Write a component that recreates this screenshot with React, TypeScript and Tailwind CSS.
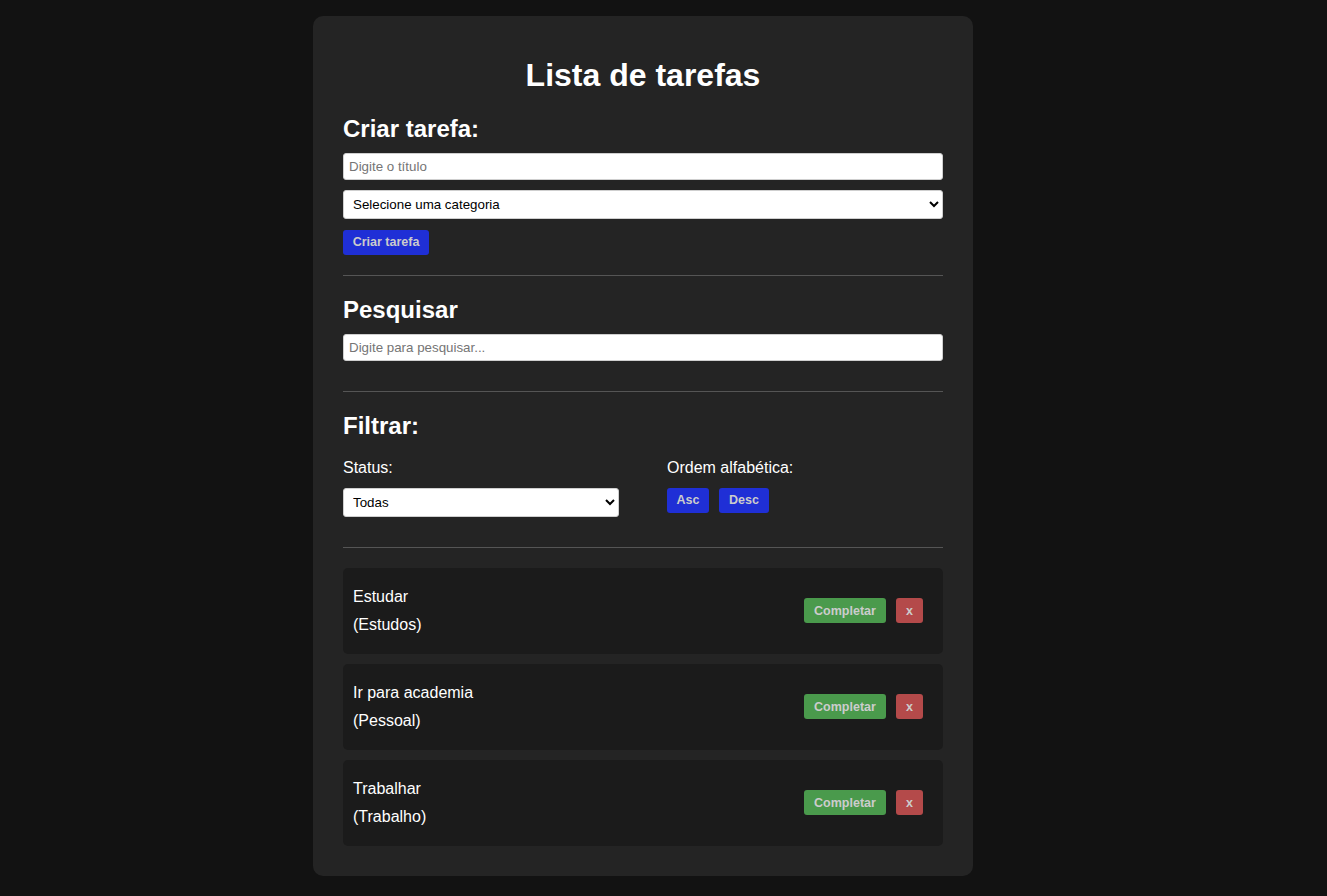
import { useState } from 'react'

type Task = { id: number; title: string; category: string }

const initialTasks: Task[] = [
  { id: 1, title: 'Estudar', category: 'Estudos' },
  { id: 2, title: 'Ir para academia', category: 'Pessoal' },
  { id: 3, title: 'Trabalhar', category: 'Trabalho' },
]

const btn = 'h-[25px] rounded-[3px] text-[12.5px] font-bold text-[#cccccc] text-center'
const field = 'w-full bg-white rounded-[3px] border border-[#cfcfcf] text-[13.33px] text-black outline-none'

const App: React.FC = () => {
  const [tasks, setTasks] = useState<Task[]>(initialTasks)

  return (
    <div className="min-h-screen bg-[#121212] flex justify-center pt-4 pb-5 pr-[41px] font-['Liberation_Sans',Arial,sans-serif]">
      <div className="w-[660px] bg-[#242424] rounded-[10px] px-[30px] pt-5 pb-[30px] text-white">
        <h1 className="mt-[21px] text-[32px] leading-[37px] font-bold text-center">Lista de tarefas</h1>

        <h2 className="mt-[21px] text-2xl leading-[28px] font-bold">Criar tarefa:</h2>
        <div className="mt-[10px] flex flex-col gap-[10px]">
          <input
            type="text"
            placeholder="Digite o título"
            className={`${field} h-[27px] px-[5px] placeholder-[#757575]`}
          />
          <select className={`${field} h-[29px] px-[5px]`}>
            <option>Selecione uma categoria</option>
            <option>Trabalho</option>
            <option>Pessoal</option>
            <option>Estudos</option>
          </select>
          <div>
            <button className={`${btn} w-[86px] bg-[#1f2fd6]`}>Criar tarefa</button>
          </div>
        </div>

        <hr className="mt-5 border-0 border-t border-[#555555]" />

        <h2 className="mt-5 text-2xl leading-[28px] font-bold">Pesquisar</h2>
        <input
          type="text"
          placeholder="Digite para pesquisar..."
          className={`${field} mt-[10px] h-[27px] px-[5px] placeholder-[#757575]`}
        />

        <hr className="mt-[30px] border-0 border-t border-[#555555]" />

        <h2 className="mt-5 text-2xl leading-[28px] font-bold">Filtrar:</h2>
        <div className="mt-[19px] flex">
          <div className="w-[324px]">
            <p className="text-base leading-[18px]">Status:</p>
            <select className={`${field} mt-[11px] h-[29px] !w-[276px] px-[5px]`}>
              <option>Todas</option>
              <option>Completas</option>
              <option>Incompletas</option>
            </select>
          </div>
          <div>
            <p className="text-base leading-[18px]">Ordem alfabética:</p>
            <div className="mt-[11px] flex gap-[10px]">
              <button className={`${btn} w-[42px] bg-[#1f2fd6]`}>Asc</button>
              <button className={`${btn} w-[50px] bg-[#1f2fd6]`}>Desc</button>
            </div>
          </div>
        </div>

        <hr className="mt-[30px] border-0 border-t border-[#555555]" />

        <div className="mt-5 flex flex-col gap-[10px]">
          {tasks.map((t) => (
            <div key={t.id} className="flex items-center justify-between bg-[#1b1b1b] rounded-[5px] pl-[10px] pr-5 py-[10px]">
              <div className="text-base leading-[18px]">
                <p className="my-[10px]">{t.title}</p>
                <p className="my-[10px]">({t.category})</p>
              </div>
              <div className="flex gap-[10px]">
                <button className={`${btn} w-[82px] bg-[#4a9a4c]`}>Completar</button>
                <button
                  className={`${btn} w-[27px] bg-[#b44a4a]`}
                  onClick={() => setTasks(tasks.filter((x) => x.id !== t.id))}
                >
                  x
                </button>
              </div>
            </div>
          ))}
        </div>
      </div>
    </div>
  )
}

export default App
